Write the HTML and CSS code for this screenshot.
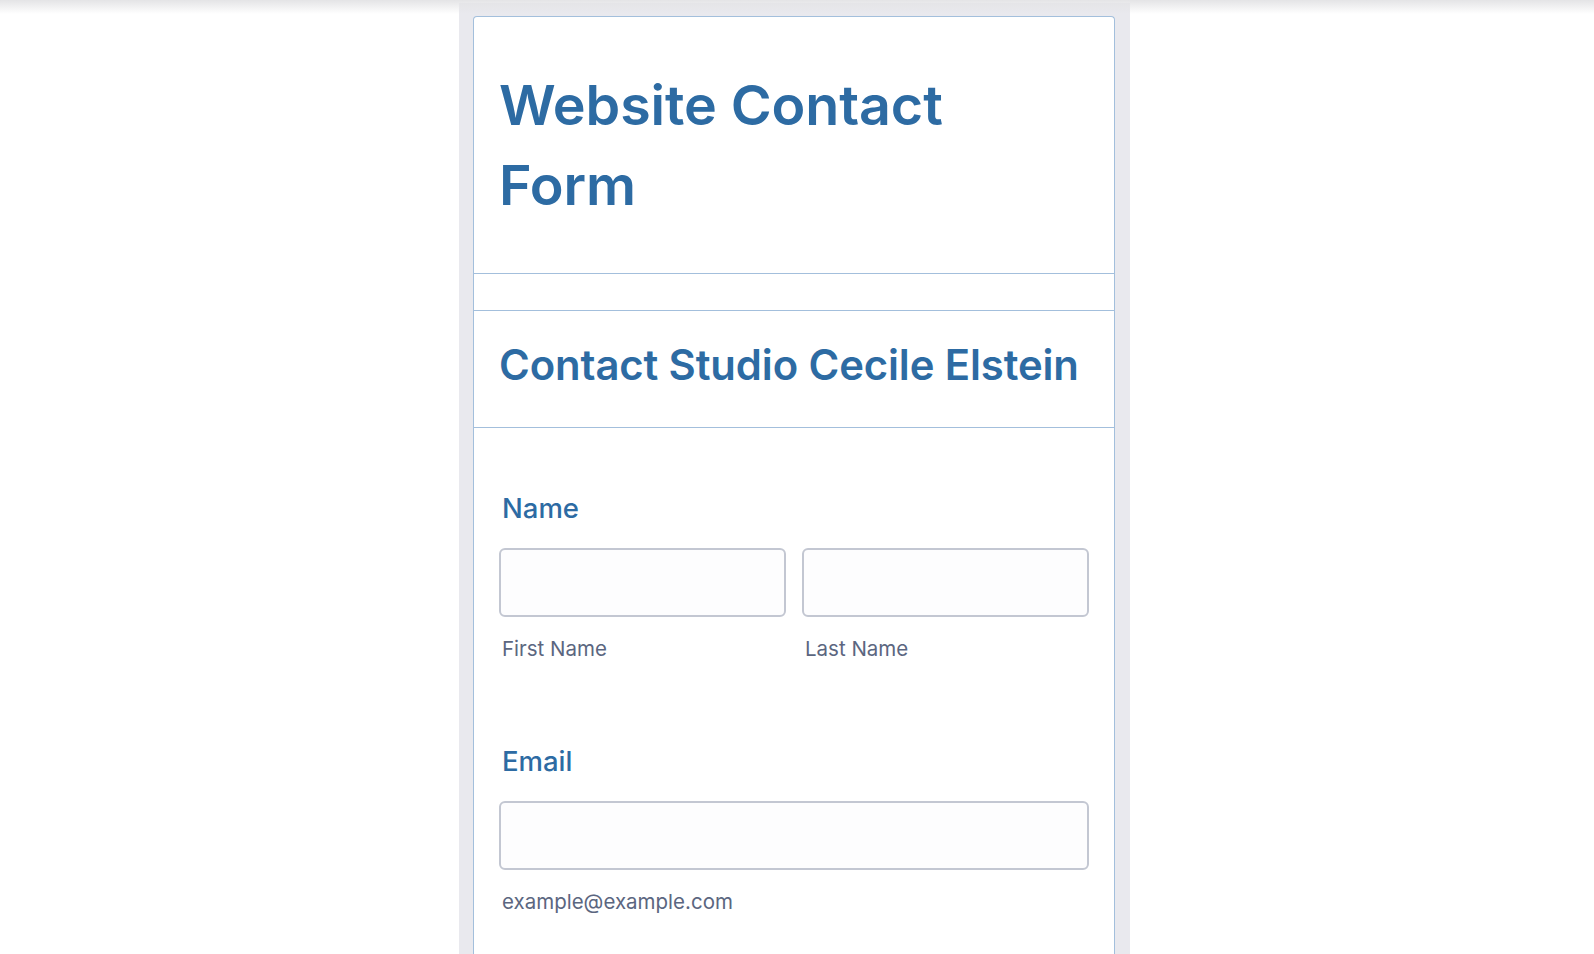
FILE: index.html
```html
<!DOCTYPE html>
<html lang="en">
<head>
<meta charset="utf-8">
<title>Website Contact Form</title>
<link rel="stylesheet" href="styles.css">
</head>
<body>
<div class="topshade"></div>
<div class="panel">
  <div class="card">
    <header class="form-header">
      <h1 class="form-title">Website Contact<br>Form</h1>
    </header>
    <div class="spacer"></div>
    <section class="section-head">
      <h2 class="section-title">Contact Studio Cecile Elstein</h2>
    </section>
    <div class="fields">
      <div class="field">
        <label class="field-label">Name</label>
        <div class="row">
          <div class="col">
            <input class="text-input" type="text">
            <span class="sublabel">First Name</span>
          </div>
          <div class="col">
            <input class="text-input" type="text">
            <span class="sublabel">Last Name</span>
          </div>
        </div>
      </div>
      <div class="field">
        <label class="field-label">Email</label>
        <div class="col">
          <input class="text-input" type="email">
          <span class="sublabel">example@example.com</span>
        </div>
      </div>
    </div>
  </div>
</div>
</body>
</html>
```
FILE: styles.css
```css
* { box-sizing: border-box; }
html, body { margin: 0; padding: 0; background: #ffffff; height: 954px; overflow: hidden; }
body { font-family: Inter, "Noto Sans", sans-serif; position: relative; }
.topshade {
  position: absolute; left: 0; right: 0; top: 0; height: 14px;
  background: linear-gradient(#e4e4e6, rgba(255,255,255,0));
  z-index: 2;
}
.panel {
  width: 671px;
  margin-left: 459px;
  padding: 13px 15px 0 14px;
  margin-top: 3px;
  background: #e9e9ee;
  height: 951px;
}
.card {
  background: #ffffff;
  border: 1px solid #a3bfdc;
  border-bottom: none;
  border-radius: 4px 4px 0 0;
  height: 940px;
}
.form-header {
  height: 257px;
  border-bottom: 1px solid #a3bfdc;
  padding: 48px 25px 0;
}
.form-title {
  margin: 0;
  font-weight: 600;
  font-size: 55.6px;
  line-height: 80px;
  color: #2d6ba3;
  letter-spacing: -0.1px;
}
.spacer { height: 37px; border-bottom: 1px solid #a3bfdc; }
.section-head {
  height: 117px;
  border-bottom: 1px solid #a3bfdc;
  padding: 26px 25px 0;
}
.section-title {
  margin: 0;
  font-weight: 600;
  font-size: 41.8px;
  line-height: 56px;
  color: #2d6ba3;
  letter-spacing: -0.1px;
}
.fields { padding: 64px 25px 0; }
.field { margin-bottom: 84px; }
.field-label {
  display: block;
  font-weight: 500;
  font-size: 27.5px;
  line-height: 32px;
  color: #2d6ba3;
  padding-left: 3px;
  margin-bottom: 24px;
}
.row { display: flex; gap: 16px; }
.col { flex: 1; display: flex; flex-direction: column; }
.text-input {
  height: 69px;
  width: 100%;
  border: 2px solid #c3c7d2;
  border-radius: 6px;
  background: #fdfdfe;
  font: inherit;
}
.sublabel {
  margin-top: 20px;
  padding-left: 3px;
  font-size: 20.5px;
  line-height: 24px;
  color: #5b6680;
}
```
